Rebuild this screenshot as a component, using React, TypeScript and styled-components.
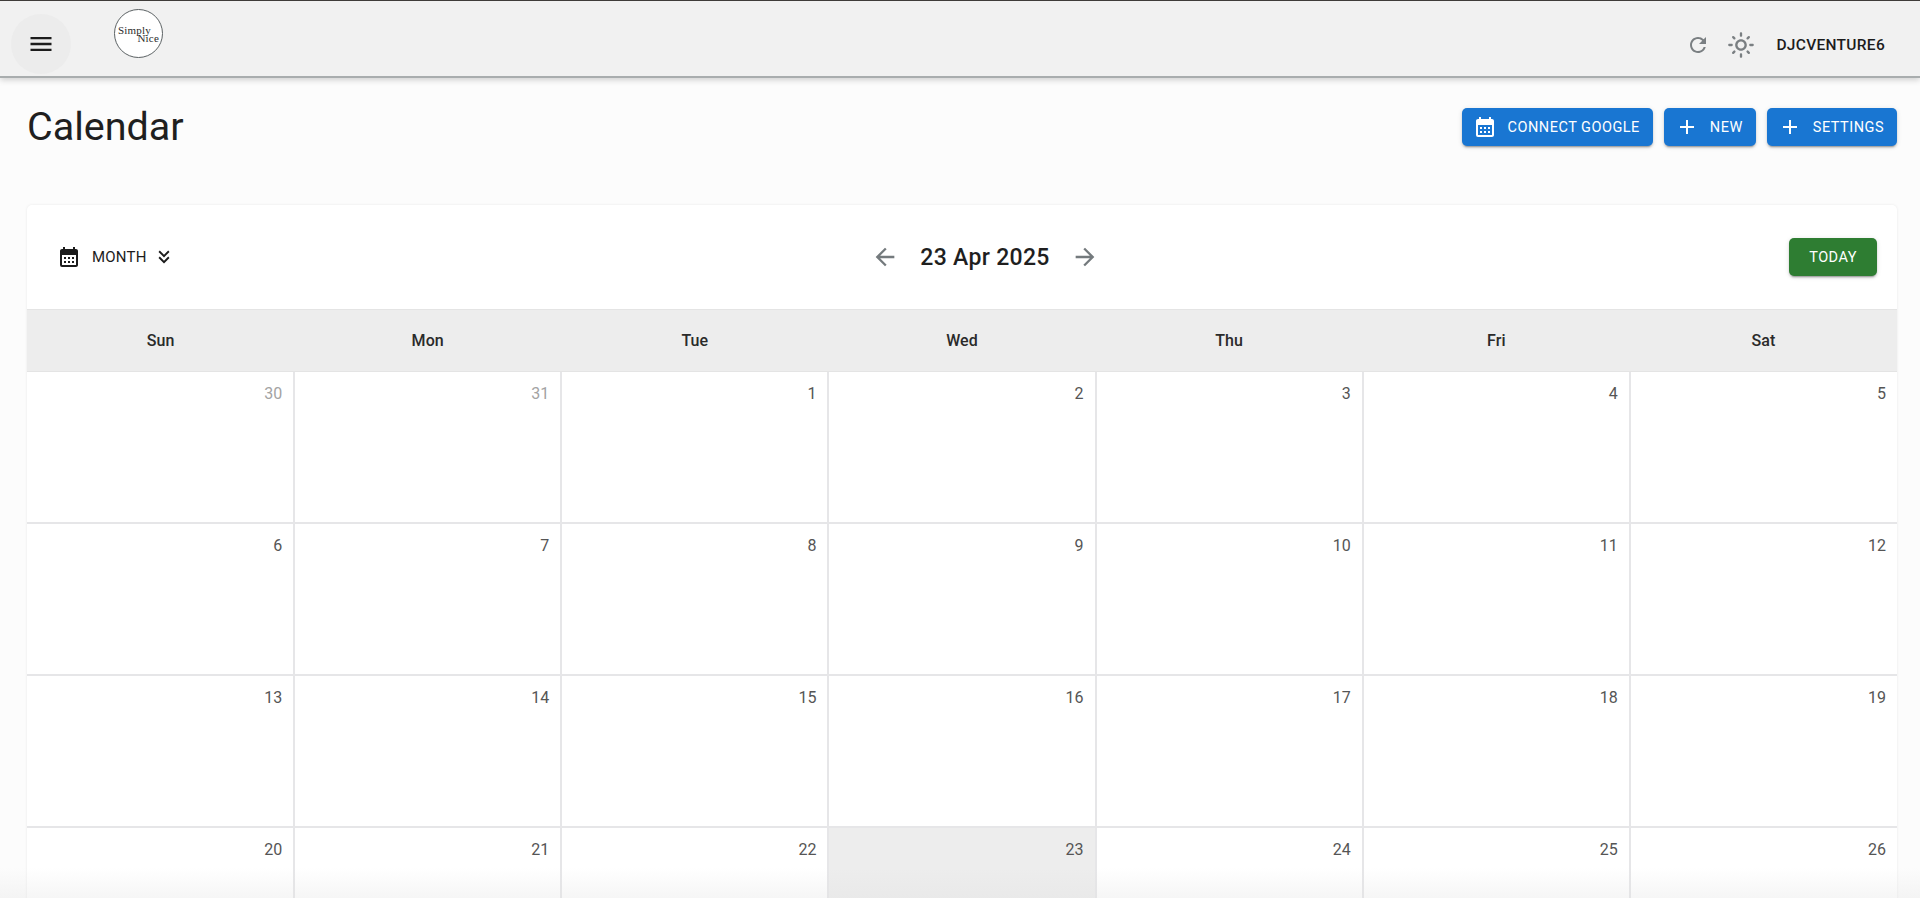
import styled, { createGlobalStyle } from "styled-components"
import {
  MdAdd,
  MdArrowBack,
  MdArrowForward,
  MdCalendarMonth,
  MdKeyboardDoubleArrowDown,
  MdMenu,
  MdOutlineLightMode,
  MdRefresh,
} from "react-icons/md"

const GlobalStyle = createGlobalStyle`
  html, body {
    margin: 0;
    height: 100%;
    overflow: hidden;
    background: #fcfcfc;
    font-family: Roboto, "Liberation Sans", sans-serif;
    color: #1c1c1c;
  }
  * { box-sizing: border-box; }
`

const Page = styled.div`
  position: relative;
  height: 898px;
  overflow: hidden;
`

const Header = styled.header`
  height: 78px;
  display: flex;
  align-items: center;
  justify-content: space-between;
  padding: 0 10px 0 11px;
  background: #f1f1f1;
  border-top: 1px solid #3f3c3a;
  border-bottom: 2px solid #a9adae;
  box-shadow: 0 2px 6px rgba(0, 0, 0, 0.18);
`

const HeaderLeft = styled.div`
  display: flex;
  align-items: flex-start;
  height: 100%;
`

const MenuButton = styled.button`
  width: 60px;
  height: 60px;
  margin-top: 13px;
  border: 0;
  border-radius: 50%;
  display: flex;
  align-items: center;
  justify-content: center;
  background: #ececec;
  color: #1c1c1c;
  font-size: 28px;
  padding: 0;
`

const Logo = styled.div`
  width: 49px;
  height: 49px;
  margin: 8px 0 0 43px;
  border-radius: 50%;
  border: 1.5px solid #5c6264;
  background: #fff;
  display: flex;
  flex-direction: column;
  justify-content: center;
  padding: 1px 3px 0 3px;
  font-family: "Liberation Serif", serif;
  font-size: 11px;
  letter-spacing: 0.2px;
  line-height: 8px;
  color: #2b2b2b;
`

const LogoLine = styled.span<{ $right?: boolean }>`
  text-align: ${(p) => (p.$right ? "right" : "left")};
`

const HeaderRight = styled.div`
  display: flex;
  align-items: center;
  color: #7a7f82;
  margin-top: 12px;
`

const UserName = styled.span`
  margin: 0 25px 0 21px;
  font-size: 15.5px;
  font-weight: 500;
  letter-spacing: 0.3px;
  color: #1c1c1c;
`

const Main = styled.main`
  padding: 0 23px 0 27px;
`

const TitleRow = styled.div`
  height: 127px;
  display: flex;
  justify-content: space-between;
  align-items: flex-start;
`

const Title = styled.h1`
  margin: 25px 0 0;
  font-size: 39.5px;
  line-height: 48px;
  font-weight: 400;
  color: #1f1f1f;
`

const Actions = styled.div`
  display: flex;
  gap: 11px;
  margin-top: 30px;
`

const ActionButton = styled.button<{ $green?: boolean }>`
  height: 38px;
  display: inline-flex;
  align-items: center;
  gap: 11px;
  padding: ${(p) => (p.$green ? "0 20px" : "0 13px 0 11px")};
  border: 0;
  border-radius: 5px;
  background: ${(p) => (p.$green ? "#2e7d32" : "#1976d2")};
  color: #fff;
  font-family: inherit;
  font-size: 14.5px;
  font-weight: 400;
  letter-spacing: 0.5px;
  box-shadow: 0 3px 1px -2px rgba(0, 0, 0, 0.2), 0 2px 2px rgba(0, 0, 0, 0.14),
    0 1px 5px rgba(0, 0, 0, 0.12);

  svg {
    font-size: 24px;
  }
`

const Card = styled.section`
  background: #fff;
  border-radius: 5px 5px 0 0;
  box-shadow: 0 0 3px rgba(0, 0, 0, 0.08);
`

const Toolbar = styled.div`
  height: 105px;
  display: grid;
  grid-template-columns: 1fr auto 1fr;
  align-items: center;
  padding: 0 20px 0 30px;
  border-bottom: 1px solid #e4e4e4;
`

const ViewPicker = styled.div`
  display: flex;
  align-items: center;
  font-size: 15px;
  font-weight: 400;
  color: #1c1c1c;
  letter-spacing: 0.2px;

  span {
    margin: 0 6px 0 11px;
  }
`

const DateNav = styled.div`
  display: flex;
  align-items: center;
  color: #747a7d;
  font-size: 28px;
  margin-left: 36px;
`

const DateLabel = styled.span`
  margin: 0 21px;
  font-size: 23px;
  font-weight: 500;
  letter-spacing: 0.3px;
  color: #1f1f1f;
`

const TodayWrap = styled.div`
  justify-self: end;
`

const WeekHead = styled.div`
  height: 62px;
  display: grid;
  grid-template-columns: repeat(7, 1fr);
  align-items: center;
  background: #ededed;
  border-bottom: 1px solid #e4e4e4;
`

const WeekDay = styled.div`
  text-align: center;
  font-size: 16px;
  font-weight: 500;
  letter-spacing: 0.1px;
  color: #2a2a2a;
`

const Grid = styled.div`
  display: grid;
  grid-template-columns: repeat(7, 1fr);
  grid-auto-rows: 152px;
`

const Cell = styled.div<{ $today?: boolean; $muted?: boolean }>`
  padding: 12px 11px 0 0;
  text-align: right;
  font-size: 16px;
  line-height: 20px;
  color: ${(p) => (p.$muted ? "#a3a3a3" : "#555")};
  background: ${(p) => (p.$today ? "#ededed" : "#fff")};
  border-left: 1px solid #e6e6e8;
  border-right: 1px solid #e6e6e8;
  border-bottom: 2px solid #e6e6e8;

  &:nth-child(7n + 1) {
    border-left: 0;
  }

  &:nth-child(7n) {
    border-right: 0;
  }
`

const BottomFade = styled.div`
  position: absolute;
  left: 0;
  right: 0;
  bottom: 0;
  height: 30px;
  background: linear-gradient(rgba(240, 240, 240, 0), rgba(225, 225, 225, 0.3));
  pointer-events: none;
`

const weekDays = ["Sun", "Mon", "Tue", "Wed", "Thu", "Fri", "Sat"]
const days = [
  30, 31, 1, 2, 3, 4, 5, 6, 7, 8, 9, 10, 11, 12, 13, 14, 15, 16, 17, 18, 19, 20,
  21, 22, 23, 24, 25, 26,
]

const App = () => (
  <Page>
    <GlobalStyle />
    <Header>
      <HeaderLeft>
        <MenuButton aria-label="menu">
          <MdMenu />
        </MenuButton>
        <Logo>
          <LogoLine>Simply</LogoLine>
          <LogoLine $right>Nice</LogoLine>
        </Logo>
      </HeaderLeft>
      <HeaderRight>
        <MdRefresh size={24} />
        <MdOutlineLightMode size={28} style={{ marginLeft: 17 }} />
        <UserName>DJCVENTURE6</UserName>
      </HeaderRight>
    </Header>
    <Main>
      <TitleRow>
        <Title>Calendar</Title>
        <Actions>
          <ActionButton>
            <MdCalendarMonth />
            CONNECT GOOGLE
          </ActionButton>
          <ActionButton>
            <MdAdd />
            NEW
          </ActionButton>
          <ActionButton>
            <MdAdd />
            SETTINGS
          </ActionButton>
        </Actions>
      </TitleRow>
      <Card>
        <Toolbar>
          <ViewPicker>
            <MdCalendarMonth size={24} />
            <span>MONTH</span>
            <MdKeyboardDoubleArrowDown size={22} />
          </ViewPicker>
          <DateNav>
            <MdArrowBack />
            <DateLabel>23 Apr 2025</DateLabel>
            <MdArrowForward />
          </DateNav>
          <TodayWrap>
            <ActionButton $green>TODAY</ActionButton>
          </TodayWrap>
        </Toolbar>
        <WeekHead>
          {weekDays.map((d) => (
            <WeekDay key={d}>{d}</WeekDay>
          ))}
        </WeekHead>
        <Grid>
          {days.map((d, i) => (
            <Cell key={i} $muted={i < 2} $today={d === 23}>
              {d}
            </Cell>
          ))}
        </Grid>
      </Card>
    </Main>
    <BottomFade />
  </Page>
)

export default App
